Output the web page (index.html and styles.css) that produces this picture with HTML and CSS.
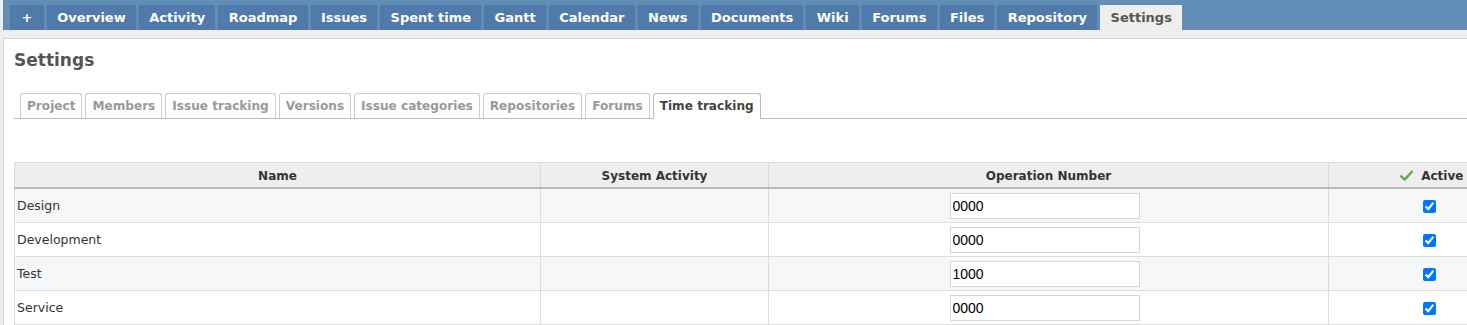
FILE: index.html
```html
<!DOCTYPE html>
<html lang="en">
<head>
    <meta charset="UTF-8">
    <title>Settings - Time tracking</title>
    <link rel="stylesheet" href="styles.css">
</head>
<body>
    <div id="main-menu">
        <ul>
            <li><a href="#" class="new">+</a></li>
            <li><a href="#">Overview</a></li>
            <li><a href="#">Activity</a></li>
            <li><a href="#">Roadmap</a></li>
            <li><a href="#">Issues</a></li>
            <li><a href="#">Spent time</a></li>
            <li><a href="#">Gantt</a></li>
            <li><a href="#">Calendar</a></li>
            <li><a href="#">News</a></li>
            <li><a href="#">Documents</a></li>
            <li><a href="#">Wiki</a></li>
            <li><a href="#">Forums</a></li>
            <li><a href="#">Files</a></li>
            <li><a href="#">Repository</a></li>
            <li><a href="#" class="selected">Settings</a></li>
        </ul>
    </div>

    <div id="content">
        <h2>Settings</h2>

        <div class="tabs">
            <ul>
                <li><a href="#">Project</a></li>
                <li><a href="#">Members</a></li>
                <li><a href="#">Issue tracking</a></li>
                <li><a href="#">Versions</a></li>
                <li><a href="#">Issue categories</a></li>
                <li><a href="#">Repositories</a></li>
                <li><a href="#">Forums</a></li>
                <li><a href="#" class="selected">Time tracking</a></li>
            </ul>
        </div>

        <table class="list">
            <thead>
                <tr>
                    <th class="col-name">Name</th>
                    <th class="col-system">System Activity</th>
                    <th class="col-number">Operation Number</th>
                    <th class="col-active">
                        <svg class="check-icon" width="13" height="11" viewBox="0 0 13 11">
                            <path d="M1 6.2 L4.6 9.6 L12 1.6" fill="none" stroke="#6aa84f" stroke-width="2.4" stroke-linecap="round" stroke-linejoin="round"/>
                        </svg>
                        Active
                    </th>
                </tr>
            </thead>
            <tbody>
                <tr class="odd">
                    <td class="name">Design</td>
                    <td></td>
                    <td class="number"><input type="text" value="0000"></td>
                    <td class="active"><input type="checkbox" checked></td>
                </tr>
                <tr class="even">
                    <td class="name">Development</td>
                    <td></td>
                    <td class="number"><input type="text" value="0000"></td>
                    <td class="active"><input type="checkbox" checked></td>
                </tr>
                <tr class="odd">
                    <td class="name">Test</td>
                    <td></td>
                    <td class="number"><input type="text" value="1000"></td>
                    <td class="active"><input type="checkbox" checked></td>
                </tr>
                <tr class="even">
                    <td class="name">Service</td>
                    <td></td>
                    <td class="number"><input type="text" value="0000"></td>
                    <td class="active"><input type="checkbox" checked></td>
                </tr>
            </tbody>
        </table>
    </div>
</body>
</html>
```

FILE: styles.css
```css
body {
    margin: 0;
    padding: 0;
    background-color: #eee;
    font-family: 'DejaVu Sans', Verdana, sans-serif;
    font-size: 12.5px;
    color: #333;
    overflow: hidden;
}
#main-menu {
    background-color: #628db6;
    margin-left: 3px;
    height: 30px;
}
#main-menu ul {
    list-style: none;
    margin: 0;
    padding: 5px 0 0 7px;
    display: flex;
    gap: 3px;
}
#main-menu a {
    display: block;
    height: 25px;
    line-height: 25px;
    padding: 0 10.25px;
    background-color: #507aaa;
    color: #fff;
    font-weight: bold;
    font-size: 13px;
    text-decoration: none;
}
#main-menu a.new {
    padding: 0 11.5px;
}
#main-menu a.selected {
    background-color: #eee;
    color: #555;
}
#content {
    background-color: #fff;
    margin: 8px 0 0 3px;
    border-top: 1px solid #d7d7d7;
    border-left: 1px solid #d7d7d7;
    padding: 0 0 0 10px;
    min-height: 300px;
}
h2 {
    margin: 0;
    padding: 10px 0 0 0;
    height: 44px;
    font-size: 17px;
    color: #555;
    line-height: 22px;
}
.tabs ul {
    list-style: none;
    margin: 0;
    padding: 0 0 0 6px;
    display: flex;
    gap: 3px;
    border-bottom: 1px solid #bbb;
    height: 25px;
}
.tabs a {
    display: block;
    height: 24px;
    line-height: 25px;
    padding: 0 6px;
    border: 1px solid #ccc;
    border-bottom: none;
    border-radius: 3px 3px 0 0;
    background-color: #fff;
    color: #999;
    font-weight: bold;
    font-size: 12.1px;
    text-decoration: none;
}
.tabs a.selected {
    height: 25px;
    border-color: #bbb;
    color: #444;
}
table.list {
    margin-top: 43px;
    border-collapse: collapse;
    table-layout: fixed;
    width: 1519px;
    border: 1px solid #e4e4e4;
}
table.list th {
    background-color: #eee;
    height: 22px;
    padding: 2px 0 0 0;
    font-size: 12px;
    color: #333;
    border: 1px solid #ddd;
    border-bottom: 2px solid #bbb;
}
.col-name { width: 525px; }
.col-system { width: 227px; }
.col-number { width: 559px; }
.col-active { text-align: left; padding-left: 71px !important; }
.check-icon {
    margin-right: 4px;
    vertical-align: -1px;
}
table.list td {
    height: 33px;
    padding: 0 2px;
    border: 1px solid #ddd;
}
tr.odd td {
    background-color: #f6f7f8;
}
tr.even td {
    background-color: #fff;
}
td.number, td.active {
    text-align: center;
}
td.number input {
    width: 190px;
    height: 26px;
    box-sizing: border-box;
    border: 1px solid #d7d7d7;
    padding: 2px 2px;
    font-family: 'Liberation Sans', Arial, sans-serif;
    font-size: 14px;
    color: #000;
    margin-left: -8px;
}
td.active input {
    width: 13px;
    height: 13px;
    margin: 0 0 0 -3px;
    vertical-align: middle;
}
```
